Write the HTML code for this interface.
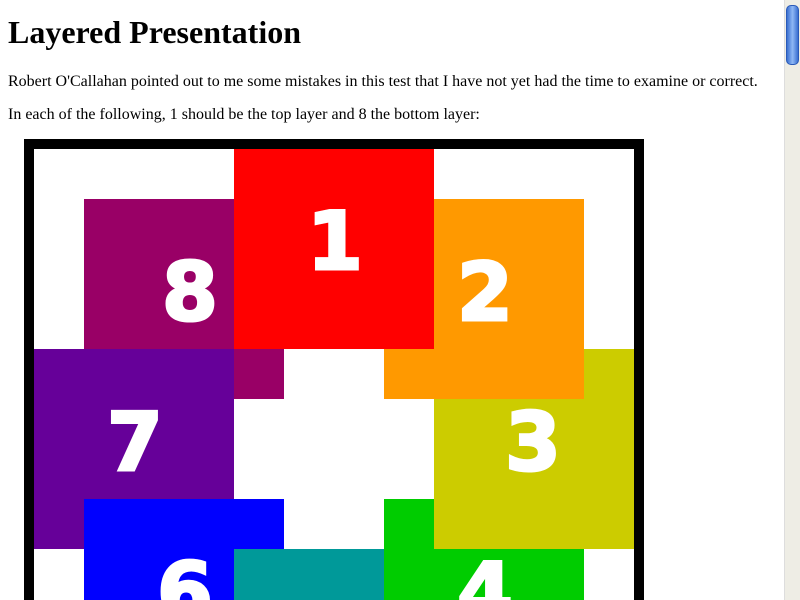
<!DOCTYPE html>
<html><head><style>
html,body{margin:0;padding:0;background:#fff;overflow:hidden}
body{width:800px;height:600px;position:relative;font-family:"Liberation Serif",serif}
h1{position:absolute;left:8px;top:14px;margin:0;font-size:32px;font-weight:bold;white-space:nowrap}
p{position:absolute;left:8px;margin:0;font-size:16px;white-space:nowrap}
.sb{position:absolute;left:784px;top:0;width:16px;height:600px;background:#eeede5;border-left:1px solid #ddd;box-sizing:border-box}
.th{position:absolute;left:786px;top:5px;width:13px;height:60px;border-radius:5px;background:linear-gradient(90deg,#3a6fd0,#8fb8f5 50%,#3a6fd0);border:1px solid #2a5ab8;box-sizing:border-box}
</style></head><body>
<h1>Layered Presentation</h1>
<p style="top:73px">Robert O'Callahan pointed out to me some mistakes in this test that I have not yet had the time to examine or correct.</p>
<p style="top:106px">In each of the following, 1 should be the top layer and 8 the bottom layer:</p>
<svg width="784" height="600" style="position:absolute;left:0;top:0">
<rect x="24" y="139" width="620" height="461" fill="#000"/>
<rect x="34" y="149" width="600" height="451" fill="#fff"/>
<rect x="84" y="199" width="200" height="200" fill="#990066"/>
<rect x="34" y="349" width="200" height="200" fill="#660099"/>
<rect x="84" y="499" width="200" height="101" fill="#0000ff"/>
<rect x="234" y="549" width="200" height="51" fill="#009999"/>
<rect x="384" y="499" width="200" height="101" fill="#00cc00"/>
<rect x="434" y="349" width="200" height="200" fill="#cccc00"/>
<rect x="384" y="199" width="200" height="200" fill="#ff9900"/>
<rect x="234" y="149" width="200" height="200" fill="#ff0000"/>
<g fill="#fff" stroke="#fff" stroke-width="3" font-family="DejaVu Sans" font-weight="bold" font-size="80" text-anchor="middle">
<text x="190" y="320">8</text>
<text x="335" y="269">1</text>
<text x="485" y="320">2</text>
<text x="135" y="470">7</text>
<text x="533" y="470">3</text>
<text x="185" y="620">6</text>
<text x="485" y="620">4</text>
</g>
<rect x="24" y="139" width="620" height="10" fill="#000"/>
<rect x="24" y="139" width="10" height="461" fill="#000"/>
<rect x="634" y="139" width="10" height="461" fill="#000"/>
</svg>
<div class="sb"></div><div class="th"></div>
</body></html>
